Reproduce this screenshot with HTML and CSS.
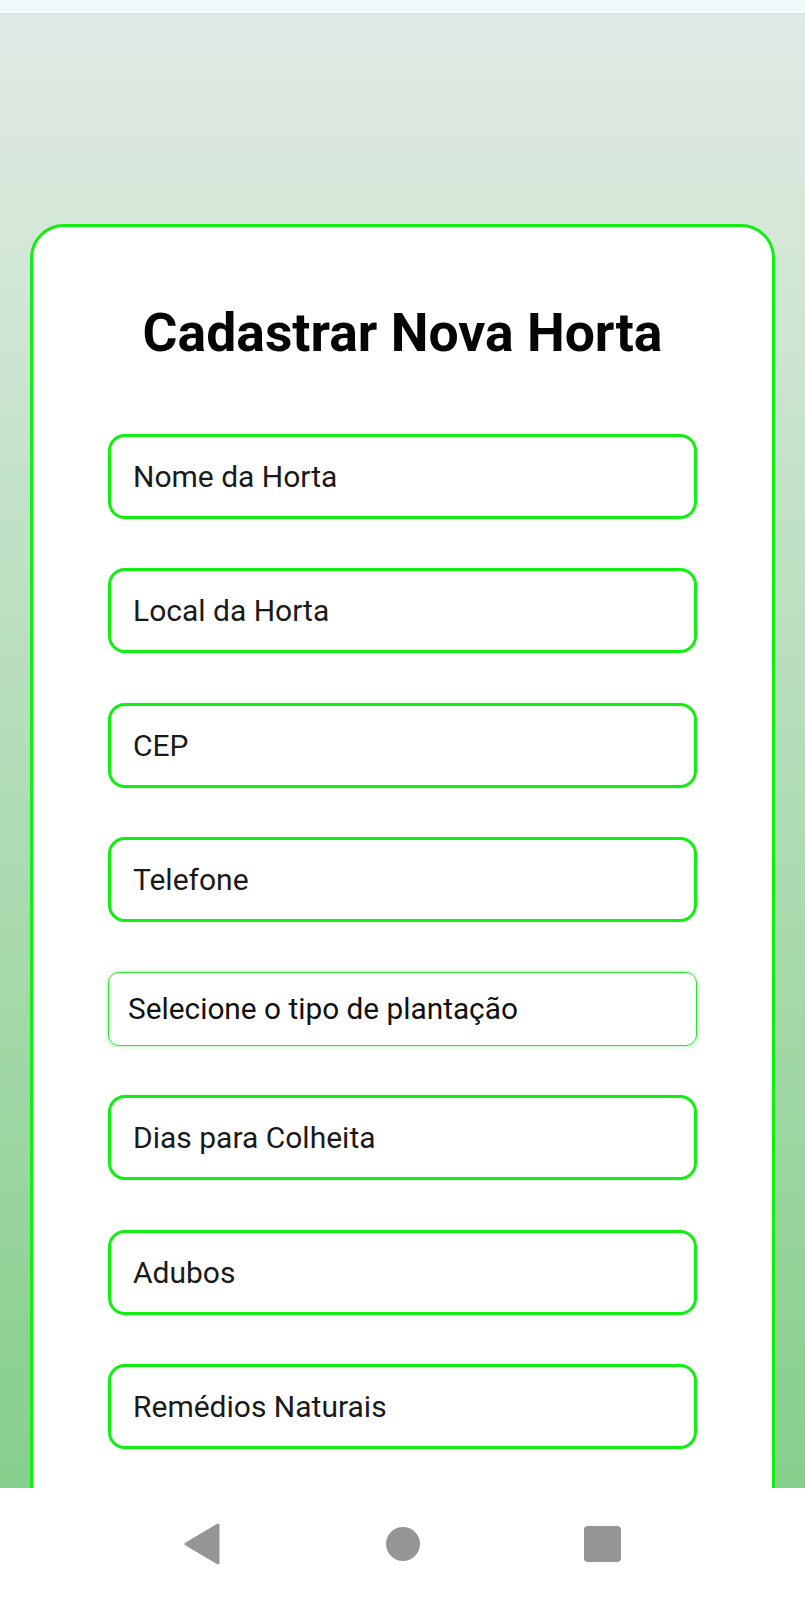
FILE: index.html
```html
<!DOCTYPE html>
<html lang="pt-BR">
<head>
<meta charset="utf-8">
<title>Cadastrar Nova Horta</title>
<link rel="stylesheet" href="styles.css">
</head>
<body>
<div class="screen">
  <div class="status-bar"></div>
  <main class="app">
    <section class="card">
      <h1 class="title">Cadastrar Nova Horta</h1>
      <form class="form">
        <div class="field">Nome da Horta</div>
        <div class="field">Local da Horta</div>
        <div class="field">CEP</div>
        <div class="field">Telefone</div>
        <div class="select">Selecione o tipo de plantação</div>
        <div class="field">Dias para Colheita</div>
        <div class="field">Adubos</div>
        <div class="field">Remédios Naturais</div>
      </form>
    </section>
  </main>
  <nav class="nav-bar">
    <div class="nav-slot">
      <svg class="nav-back" width="38" height="42" viewBox="0 0 38 42"><polygon points="35,2 3,21 35,40" fill="#959595" stroke="#959595" stroke-width="3" stroke-linejoin="round"/></svg>
    </div>
    <div class="nav-slot"><span class="nav-home"></span></div>
    <div class="nav-slot"><span class="nav-recent"></span></div>
  </nav>
</div>
</body>
</html>
```

FILE: styles.css
```css
html, body {
  margin: 0;
  padding: 0;
}

body {
  font-family: Roboto, "Noto Sans", "Liberation Sans", sans-serif;
  background: #ffffff;
}

.screen {
  width: 805px;
  height: 1600px;
  display: flex;
  flex-direction: column;
  overflow: hidden;
}

.status-bar {
  flex: 0 0 13px;
  background: linear-gradient(#eff8fb 0, #eff8fb 11px, #f6fbfd 11px);
  border-bottom: 1px solid #d6e0e0;
}

.app {
  flex: 1 1 auto;
  min-height: 0;
  overflow: hidden;
  background: linear-gradient(180deg, #e0e9e4 0%, #d5e7d9 14%, #b3ddb8 50%, #86cf8b 100%);
  padding-top: 209.5px;
}

.card {
  margin: 0 30px;
  background: #ffffff;
  border: 3px solid #11ee11;
  border-radius: 34px;
  padding: 74px 75px 200px;
}

.title {
  margin: 0;
  font-size: 53.5px;
  font-weight: 700;
  line-height: normal;
  color: #050505;
  text-align: center;
}

.form {
  margin-top: 70px;
  display: flex;
  flex-direction: column;
  gap: 49.5px;
}

.field {
  height: 85px;
  box-sizing: border-box;
  border: 3px solid #11ee11;
  border-radius: 17px;
  box-shadow: 0 0 1px rgba(17, 238, 17, 0.6);
  padding: 0 22px;
  display: flex;
  align-items: center;
  font-size: 30px;
  color: #1a1a1a;
}

.select {
  height: 74px;
  box-sizing: border-box;
  border: 1.5px solid #2fe02f;
  border-radius: 11px;
  box-shadow: 0 0 4px rgba(40, 225, 40, 0.45);
  padding: 0 19px;
  display: flex;
  align-items: center;
  font-size: 29.8px;
  color: #111111;
}

.nav-bar {
  flex: 0 0 112px;
  background: #ffffff;
  display: flex;
  justify-content: center;
  align-items: center;
}

.nav-slot {
  width: 200px;
  display: flex;
  justify-content: center;
  align-items: center;
}

.nav-back {
  display: block;
  margin-left: -2px;
}

.nav-home {
  width: 34px;
  height: 34px;
  border-radius: 50%;
  background: #959595;
}

.nav-recent {
  width: 37px;
  height: 36px;
  border-radius: 4px;
  background: #959595;
}
```
